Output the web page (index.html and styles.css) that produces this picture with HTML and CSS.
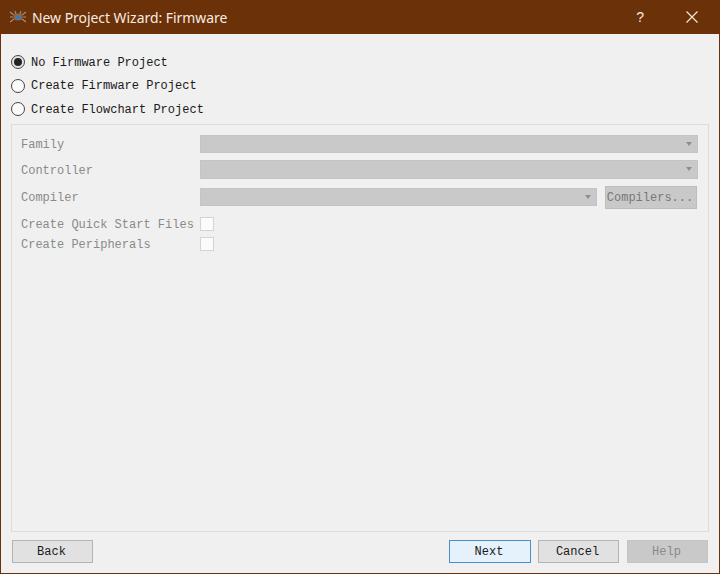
FILE: index.html
```html
<!DOCTYPE html>
<html lang="en">
<head>
<meta charset="utf-8">
<title>New Project Wizard: Firmware</title>
<link rel="stylesheet" href="styles.css">
</head>
<body>
<div class="window">
  <header class="titlebar">
    <svg class="app-icon" width="18" height="16" viewBox="0 0 18 16">
      <g fill="none" stroke="#a8917a" stroke-width="1.1">
        <path d="M1 3l4 3M17 3l-4 3M1 13l4-3M17 13l-4-3M1 8h3M14 8h3"/>
        <path d="M6 2l1 3M12 2l-1 3"/>
      </g>
      <ellipse cx="9" cy="8" rx="4.5" ry="3.6" fill="#8a6a4e"/>
      <circle cx="9" cy="8.6" r="2.4" fill="#3f78b4"/>
    </svg>
    <span class="title">New Project Wizard: Firmware</span>
    <span class="help-btn">?</span>
    <svg class="close-btn" width="12" height="12" viewBox="0 0 12 12">
      <path d="M.5.5l11 11M11.5.5l-11 11" stroke="#f6e6d6" stroke-width="1.2" fill="none"/>
    </svg>
  </header>
  <main class="content">
    <div class="radios">
      <label class="radio-row"><span class="radio checked"></span><span class="radio-text">No Firmware Project</span></label>
      <label class="radio-row"><span class="radio"></span><span class="radio-text">Create Firmware Project</span></label>
      <label class="radio-row"><span class="radio"></span><span class="radio-text">Create Flowchart Project</span></label>
    </div>
    <section class="group">
      <div class="row row-family">
        <span class="label">Family</span>
        <div class="combo"><span class="arrow"></span></div>
      </div>
      <div class="row row-controller">
        <span class="label">Controller</span>
        <div class="combo"><span class="arrow"></span></div>
      </div>
      <div class="row row-compiler">
        <span class="label">Compiler</span>
        <div class="combo"><span class="arrow"></span></div>
        <div class="compilers-btn">Compilers...</div>
      </div>
      <div class="row row-check first-check">
        <span class="label">Create Quick Start Files</span>
        <span class="checkbox"></span>
      </div>
      <div class="row row-check second-check">
        <span class="label">Create Peripherals</span>
        <span class="checkbox"></span>
      </div>
    </section>
    <footer class="buttons">
      <button class="btn">Back</button>
      <span class="spacer"></span>
      <button class="btn primary">Next</button>
      <button class="btn cancel">Cancel</button>
      <button class="btn disabled">Help</button>
    </footer>
  </main>
</div>
</body>
</html>
```
FILE: styles.css
```css
* { box-sizing: border-box; }
html, body { margin: 0; height: 100%; }
body { overflow: hidden; background: #f0f0f0; }

.window {
  width: 720px;
  height: 574px;
  display: flex;
  flex-direction: column;
  border: 1px solid #6b3108;
  border-top: 0;
  background: #f0f0f0;
  font-family: "Liberation Mono", monospace;
  font-size: 12px;
  color: #1a1a1a;
}

.titlebar {
  height: 34px;
  flex: none;
  margin: 0 -1px;
  background: #6b3108;
  display: flex;
  align-items: center;
  color: #f8ece0;
}
.app-icon { margin-left: 9px; margin-right: 5px; }
.title {
  font-family: "Noto Sans", "Liberation Sans", sans-serif;
  font-size: 13.9px;
  flex: 1;
}
.help-btn {
  font-family: "Liberation Sans", sans-serif;
  font-size: 14px;
  margin-right: 42px;
}
.close-btn { margin-right: 22px; }

.content {
  flex: 1;
  display: flex;
  flex-direction: column;
  padding: 0 10px 10px;
  min-height: 0;
}

.radios {
  display: flex;
  flex-direction: column;
  padding-top: 16.5px;
  height: 90px;
  flex: none;
}
.radio-row {
  display: flex;
  align-items: center;
  gap: 6px;
  height: 23.5px;
  font-size: 12px;
}
.radio-text { padding-top: 1px; }
.radio {
  width: 14px;
  height: 14px;
  border: 1px solid #444;
  border-radius: 50%;
  background: #fbfbfb;
  display: flex;
  align-items: center;
  justify-content: center;
  flex: none;
}
.radio.checked { background: #e4e4e4; }
.radio.checked::after {
  content: "";
  width: 8px;
  height: 8px;
  border-radius: 50%;
  background: #222;
}

.group {
  flex: 1;
  min-height: 0;
  border: 1px solid #dcdcdc;
  padding: 10px 10px 0 9px;
  color: #8a8a8a;
}
.row {
  display: flex;
  align-items: center;
  height: 18px;
}
.label { width: 179px; flex: none; padding-top: 2px; }
.combo {
  flex: 1;
  height: 18px;
  background: #c9c9c9;
  border: 1px solid #c4c4c4;
  position: relative;
}
.arrow {
  position: absolute;
  right: 5px;
  top: 6px;
  border-left: 3px solid transparent;
  border-right: 3px solid transparent;
  border-top: 4px solid #8e8e8e;
}
.row-controller { margin-top: 7px; height: 19px; }
.row-controller .combo { height: 19px; }
.row-compiler { margin-top: 9px; }
.row-compiler .combo { flex: 1; }
.compilers-btn {
  width: 92px;
  height: 23px;
  margin-left: 8px;
  margin-right: 1px;
  padding-top: 2px;
  padding-right: 2px;
  flex: none;
  background: #c9c9c9;
  border: 1px solid #bdbdbd;
  display: flex;
  align-items: center;
  justify-content: center;
  color: #787878;
}
.row-check { height: 14px; }
.first-check { margin-top: 11px; }
.second-check { margin-top: 6px; }
.checkbox {
  width: 14px;
  height: 14px;
  background: #fbfbfb;
  border: 1px solid #d4d4d4;
  flex: none;
}

.buttons {
  flex: none;
  display: flex;
  gap: 7px;
  padding: 8px 1px 0 1px;
  height: 31px;
}
.spacer { flex: 1; }
.btn {
  width: 81px;
  height: 23px;
  padding: 1px 2px 0 0;
  font: inherit;
  color: #1a1a1a;
  background: #e1e1e1;
  border: 1px solid #b4b4b4;
}
.btn.primary {
  width: 82px;
  background: #e5f1fb;
  border-color: #4a90c8;
}
.btn.cancel { margin-right: 1px; }
.btn.disabled {
  background: #c9c9c9;
  border-color: #c4c4c4;
  color: #8a8a8a;
}
```
